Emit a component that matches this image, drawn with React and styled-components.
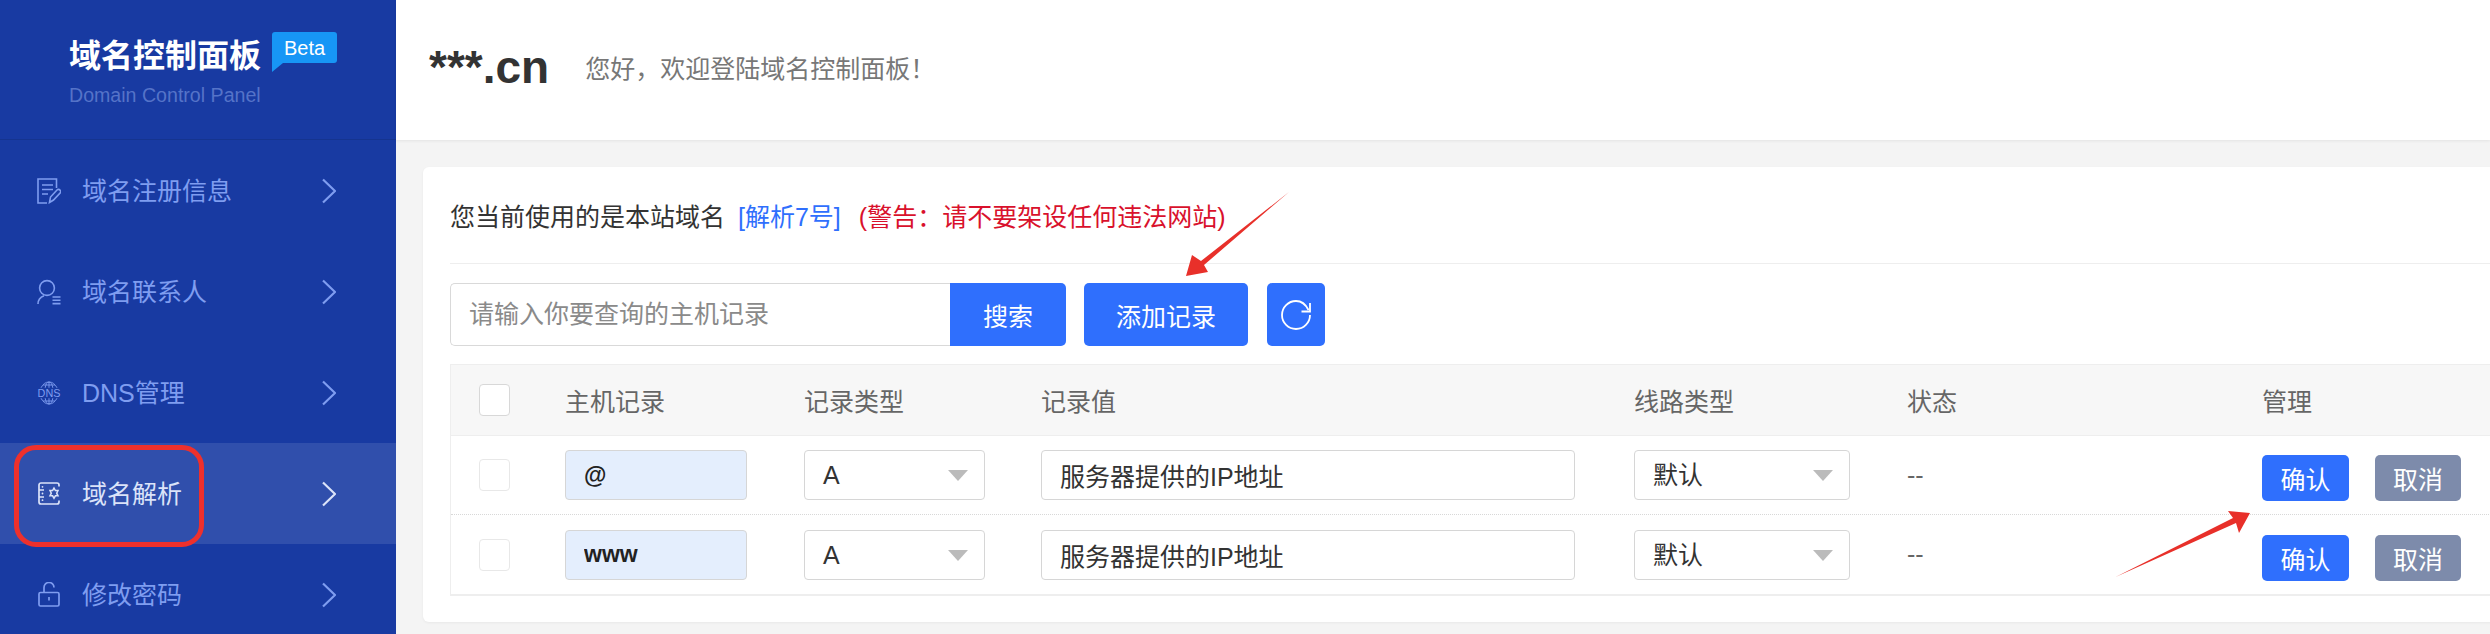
import React from "react";
import styled, { createGlobalStyle } from "styled-components";

const Global = createGlobalStyle`
  html, body { margin: 0; padding: 0; background: #f4f4f4; overflow: hidden; }
  * { box-sizing: border-box; }
  body, input, button {
    font-family: "Liberation Sans", "Noto Sans CJK SC", sans-serif;
  }
`;

const Page = styled.div`
  position: relative;
  display: flex;
  width: 2490px;
  height: 634px;
  overflow: hidden;
`;

const Sidebar = styled.aside`
  flex: 0 0 396px;
  background: #183aa2;
  display: flex;
  flex-direction: column;
  overflow: hidden;
`;

const Brand = styled.div`
  flex: 0 0 140px;
  padding: 38px 0 0 69px;
  border-bottom: 1px solid #15348f;
`;

const BrandRow = styled.div`
  display: flex;
  align-items: flex-start;
  gap: 10px;
`;

const BrandTitle = styled.div`
  font-size: 32px;
  line-height: 36px;
  font-weight: 700;
  color: #fff;
  width: 193px;
`;

const Badge = styled.span`
  position: relative;
  width: 65px;
  height: 31px;
  margin-top: -6px;
  background: #1796f6;
  color: #fff;
  border-radius: 3px 3px 3px 0;
  font-size: 20px;
  line-height: 33px;
  text-align: center;
  &::after {
    content: "";
    position: absolute;
    left: 0;
    top: 100%;
    border-top: 9px solid #1796f6;
    border-right: 11px solid transparent;
  }
`;

const BrandSub = styled.div`
  margin-top: 11px;
  width: 193px;
  font-size: 19.6px;
  line-height: 20px;
  color: #5573c8;
  white-space: nowrap;
`;

const Menu = styled.nav`
  display: flex;
  flex-direction: column;
  flex: 0 0 auto;
`;

const Item = styled.div`
  position: relative;
  flex: 0 0 101px;
  height: 101px;
  display: flex;
  align-items: center;
  padding: 0 60px 0 37px;
  background: ${(p) => (p.$active ? "#304fac" : "transparent")};
  color: ${(p) => (p.$active ? "#dbe3f9" : "#7f9df0")};
`;

const IconBox = styled.span`
  display: flex;
  width: 24px;
  height: 26px;
  margin-right: 21px;
  align-items: center;
  justify-content: center;
`;

const ItemLabel = styled.span`
  flex: 1;
  font-size: 25px;
  line-height: 30px;
`;

const Highlight = styled.span`
  position: absolute;
  left: 14px;
  top: 2px;
  width: 190px;
  height: 102px;
  border: 5.5px solid #ee302c;
  border-radius: 22px;
`;

const Main = styled.main`
  flex: 1;
  min-width: 0;
  display: flex;
  flex-direction: column;
`;

const Header = styled.header`
  flex: 0 0 140px;
  background: #fff;
  display: flex;
  align-items: center;
  padding: 0 0 6px 33px;
  box-shadow: 0 1px 3px rgba(0, 0, 0, 0.07);
`;

const Domain = styled.h1`
  margin: 0;
  font-size: 46px;
  line-height: 50px;
  font-weight: 700;
  color: #333;
`;

const Welcome = styled.span`
  margin-left: 36px;
  font-size: 25px;
  color: #777;
`;

const Body = styled.div`
  padding: 27px 0 0 27px;
`;

const Card = styled.section`
  width: 2200px;
  background: #fff;
  border-radius: 6px;
  padding: 0 0 26px 27px;
  box-shadow: 0 1px 3px rgba(0, 0, 0, 0.05);
`;

const Notice = styled.div`
  height: 97px;
  display: flex;
  align-items: center;
  border-bottom: 1px solid #eeeeee;
  font-size: 25px;
  color: #333;
  white-space: nowrap;
`;

const NoticeLink = styled.span`
  margin-left: 13px;
  color: #2f6ffd;
`;

const NoticeWarn = styled.span`
  margin-left: 18px;
  color: #d9112c;
`;

const Toolbar = styled.div`
  display: flex;
  margin-top: 19px;
  height: 63px;
`;

const Search = styled.input`
  width: 500px;
  height: 63px;
  padding: 0 18px;
  border: 1px solid #d9d9d9;
  border-right: 0;
  border-radius: 5px 0 0 5px;
  font-size: 25px;
  color: #333;
  outline: none;
  &::placeholder { color: #8a8a8a; opacity: 1; }
`;

const Button = styled.button`
  height: ${(p) => p.$h || 63}px;
  width: ${(p) => p.$w}px;
  margin-left: ${(p) => p.$ml || 0}px;
  padding: 0;
  border: 0;
  border-radius: ${(p) => p.$radius || "5px"};
  background: ${(p) => p.$bg || "#2f6ffd"};
  color: #fff;
  font-size: 25px;
  display: flex;
  align-items: center;
  justify-content: center;
`;

const Table = styled.div`
  margin-top: 18px;
  border: 1px solid #eeeeee;
  border-right: 0;
`;

const Row = styled.div`
  display: grid;
  grid-template-columns: 114px 239px 237px 593px 273px 355px 1fr;
  align-items: center;
  height: ${(p) => p.$h}px;
  background: ${(p) => (p.$head ? "#f7f7f7" : "#fff")};
  border-bottom: ${(p) => p.$line || "0"};
  color: ${(p) => (p.$head ? "#666" : "#333")};
  font-size: 25px;
`;

const Check = styled.span`
  display: block;
  margin-left: 28px;
  width: 31px;
  height: 32px;
  background: #fff;
  border: 1px solid ${(p) => (p.$head ? "#d8d8d8" : "#e8e8e8")};
  border-radius: 4px;
`;

const Field = styled.input`
  display: block;
  width: ${(p) => p.$w}px;
  height: 50px;
  padding: 0 18px;
  border: 1px solid #d6d6d6;
  border-radius: 4px;
  background: ${(p) => p.$bg || "#fff"};
  font-size: ${(p) => p.$fs || 25}px;
  font-weight: ${(p) => p.$fw || 400};
  color: ${(p) => p.$color || "#333"};
  outline: none;
`;

const Select = styled.div`
  position: relative;
  width: ${(p) => p.$w}px;
  height: 50px;
  padding: 0 18px;
  border: 1px solid #d6d6d6;
  border-radius: 4px;
  background: #fff;
  line-height: 48px;
  color: #333;
  &::after {
    content: "";
    position: absolute;
    right: 16px;
    top: 19px;
    border-top: 11px solid #bbbbbb;
    border-left: 10px solid transparent;
    border-right: 10px solid transparent;
  }
`;

const Status = styled.span`
  color: #666;
`;

const Actions = styled.div`
  display: flex;
  gap: 26px;
  margin-top: 6px;
`;

const Annotations = styled.svg`
  position: absolute;
  left: 0;
  top: 0;
  pointer-events: none;
`;

const EditIcon = () => (
  <svg width="24" height="26" viewBox="0 0 24 26" fill="none" stroke="currentColor" strokeWidth="1.6">
    <path d="M19.5 10V1H1v24h9" />
    <path d="M5 7h11M5 11.5h11M5 16h6" />
    <path d="M12.5 24.5l1-5.5 6.5-7a2 2 0 0 1 3 .2 2 2 0 0 1 0 3L16.5 22z" />
  </svg>
);

const ContactIcon = () => (
  <svg width="24" height="26" viewBox="0 0 24 26" fill="none" stroke="currentColor" strokeWidth="1.6">
    <circle cx="10" cy="9" r="7.4" />
    <path d="M1 25c0-4 2.500-7 6-8.300" />
    <path d="M15.500 18h8M15.500 21.300h8M15.500 24.600h8" />
  </svg>
);

const DnsIcon = () => (
  <svg width="24" height="24" viewBox="0 0 24 24" fill="none" stroke="currentColor" strokeWidth="0.9">
    <path d="M4 6.800C6 3 8.500 1 12 1s6 2 8 5.800" />
    <path d="M8.200 6.800C8.700 3.500 10 1 12 1s3.300 2.500 3.800 5.800M12 1v5.800M6 4h12" />
    <path d="M4 17.200C6 21 8.500 23 12 23s6-2 8-5.800" />
    <path d="M8.200 17.200C8.700 20.500 10 23 12 23s3.300-2.500 3.800-5.800M12 17.200V23M6 20h12" />
    <text x="12" y="15.900" textAnchor="middle" fontSize="10.800" fontFamily="Liberation Sans" fill="currentColor" stroke="none">DNS</text>
  </svg>
);

const ResolveIcon = () => (
  <svg width="23" height="23" viewBox="0 0 23 23" fill="none" stroke="currentColor" strokeWidth="1.7">
    <path d="M21 4.500V3a2 2 0 0 0-2-2H3a2 2 0 0 0-2 2v17a2 2 0 0 0 2 2h16a2 2 0 0 0 2-2v-1.500" />
    <path d="M1 8h5M1 15h5" />
    <circle cx="4.500" cy="4.800" r=".9" fill="currentColor" stroke="none" />
    <circle cx="4.500" cy="11.500" r=".9" fill="currentColor" stroke="none" />
    <circle cx="4.500" cy="18.200" r=".9" fill="currentColor" stroke="none" />
    <path d="M16 6l1.400 2.500h2.600l-1.300 2.700 1.300 2.600h-2.600L16 16.300l-1.400-2.500H12l1.300-2.600L12 8.500h2.600z" strokeWidth="1.5" />
  </svg>
);

const LockIcon = () => (
  <svg width="22" height="25" viewBox="0 0 22 25" fill="none" stroke="currentColor" strokeWidth="1.7">
    <rect x="1" y="10.500" width="20" height="13.500" rx="1.500" />
    <path d="M6 10.500V5.500a5 5 0 0 1 10 0" />
    <path d="M11 15v3.500" />
  </svg>
);

const Chevron = () => (
  <svg width="14" height="26" viewBox="0 0 14 26" fill="none" stroke="currentColor" strokeWidth="2.2">
    <path d="M1 1.500L13 13 1 24.500" />
  </svg>
);

const RefreshIcon = () => (
  <svg width="34" height="34" viewBox="-17 -17 34 34" fill="none" stroke="#fff" strokeWidth="1.8">
    <path d="M14 0A14 14 0 1 1 0-14c5 0 9.500 3 12.500 9" />
    <path d="M14-12v8.500H5.500" />
  </svg>
);

const menu = [
  { label: "域名注册信息", icon: <EditIcon /> },
  { label: "域名联系人", icon: <ContactIcon /> },
  { label: "DNS管理", icon: <DnsIcon /> },
  { label: "域名解析", icon: <ResolveIcon />, active: true },
  { label: "修改密码", icon: <LockIcon /> },
];

const columns = ["主机记录", "记录类型", "记录值", "线路类型", "状态", "管理"];

const RecordRow = ({ host, h, line }) => (
  <Row $h={h} $line={line}>
    <Check />
    <Field $w={182} $bg="#e4eefd" $fw={700} $fs={23} $color="#222" readOnly value={host} />
    <Select $w={181}>A</Select>
    <Field $w={534} readOnly value="服务器提供的IP地址" />
    <Select $w={216}>默认</Select>
    <Status>--</Status>
    <Actions>
      <Button $w={87} $h={46}>确认</Button>
      <Button $w={86} $h={46} $bg="#7d8bab">取消</Button>
    </Actions>
  </Row>
);

export default function App() {
  return (
    <Page>
      <Global />
      <Sidebar>
        <Brand>
          <BrandRow>
            <BrandTitle>域名控制面板</BrandTitle>
            <Badge>Beta</Badge>
          </BrandRow>
          <BrandSub>Domain Control Panel</BrandSub>
        </Brand>
        <Menu>
          {menu.map((m) => (
            <Item key={m.label} $active={m.active}>
              <IconBox>{m.icon}</IconBox>
              <ItemLabel>{m.label}</ItemLabel>
              <Chevron />
              {m.active && <Highlight />}
            </Item>
          ))}
        </Menu>
      </Sidebar>
      <Main>
        <Header>
          <Domain>***.cn</Domain>
          <Welcome>您好，欢迎登陆域名控制面板！</Welcome>
        </Header>
        <Body>
          <Card>
            <Notice>
              您当前使用的是本站域名
              <NoticeLink>[解析7号]</NoticeLink>
              <NoticeWarn>(警告：请不要架设任何违法网站)</NoticeWarn>
            </Notice>
            <Toolbar>
              <Search placeholder="请输入你要查询的主机记录" />
              <Button $w={116} $radius="0 5px 5px 0">搜索</Button>
              <Button $w={164} $ml={18}>添加记录</Button>
              <Button $w={58} $ml={19}><RefreshIcon /></Button>
            </Toolbar>
            <Table>
              <Row $head $h={71} $line="1px solid #eeeeee">
                <Check $head />
                {columns.map((c) => <span key={c}>{c}</span>)}
              </Row>
              <RecordRow host="@" h={79} line="1px dotted #d8d8d8" />
              <RecordRow host="www" h={80} line="1px solid #eeeeee" />
            </Table>
          </Card>
        </Body>
      </Main>
      <Annotations width="2490" height="634" viewBox="0 0 2490 634">
        <polygon fill="#e8302a" points="1289,192 1204,265 1208,272 1186,276 1192,255 1201,261" />
        <polygon fill="#e8302a" points="2115.5,577 2233,518 2228,511 2250,513 2239,533 2236,523" />
      </Annotations>
    </Page>
  );
}
